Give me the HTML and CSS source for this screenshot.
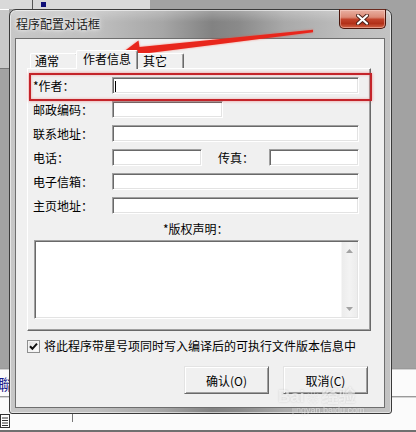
FILE: index.html
```html
<!DOCTYPE html>
<html lang="zh-CN">
<head>
<meta charset="utf-8">
<title>程序配置对话框</title>
<link rel="stylesheet" href="styles.css">
</head>
<body>
<div class="desktop">
  <!-- window behind the dialog -->
  <div class="backwin">
    <div class="bw-top"><span class="bw-sep"></span><span class="bw-mark"></span></div>
    <div class="bw-left"></div>
    <div class="bw-bottom">
      <div class="bw-line"></div>
      <div class="bw-row"><span class="bw-char">聯</span></div>
      <div class="bw-line"></div>
      <div class="bw-status">
        <svg class="bw-doc" width="10" height="14" viewBox="0 0 10 14"><rect x="0.5" y="0.5" width="9" height="13" fill="#fff" stroke="#333"/><path d="M2 4h6M2 6.5h6M2 9h6M2 11.5h6" stroke="#333"/></svg>
        <span class="bw-vsep"></span>
      </div>
    </div>
  </div>

  <div class="dialog">
    <div class="titlebar">
      <span class="title">程序配置对话框</span>
      <div class="close">
        <svg width="13" height="11" viewBox="0 0 13 11"><path d="M2 1.5l9 8M11 1.5l-9 8" stroke="#4a2018" stroke-width="4" stroke-linecap="round"/><path d="M2 1.5l9 8M11 1.5l-9 8" stroke="#fff" stroke-width="2.2" stroke-linecap="round"/></svg>
      </div>
    </div>
    <div class="client">
      <div class="tabs">
        <div class="tab">通常</div>
        <div class="tab active">作者信息</div>
        <div class="tab">其它</div>
      </div>
      <div class="panel">
        <div class="row">
          <span class="label">*作者：</span>
          <span class="edit wide"><span class="caret"></span></span>
        </div>
        <div class="row">
          <span class="label">邮政编码：</span>
          <span class="edit zip"></span>
        </div>
        <div class="row">
          <span class="label">联系地址：</span>
          <span class="edit wide"></span>
        </div>
        <div class="row">
          <span class="label">电话：</span>
          <span class="edit half"></span>
          <span class="label fax">传真：</span>
          <span class="edit half"></span>
        </div>
        <div class="row">
          <span class="label">电子信箱：</span>
          <span class="edit wide"></span>
        </div>
        <div class="row">
          <span class="label">主页地址：</span>
          <span class="edit wide"></span>
        </div>
        <div class="memo-label">*版权声明：</div>
        <div class="memo">
          <div class="memo-text"></div>
          <div class="vscroll">
            <svg width="7" height="4" viewBox="0 0 7 4"><path d="M0 4L3.5 0L7 4z" fill="#a3a3a3"/></svg>
            <svg width="7" height="4" viewBox="0 0 7 4"><path d="M0 0L3.5 4L7 0z" fill="#a3a3a3"/></svg>
          </div>
        </div>
      </div>
      <div class="check">
        <span class="box"><svg width="11" height="11" viewBox="0 0 11 11"><path d="M2 5.2l2.4 2.6L9 2.6" fill="none" stroke="#111" stroke-width="2"/></svg></span>
        <span>将此程序带星号项同时写入编译后的可执行文件版本信息中</span>
      </div>
      <div class="buttons">
        <div class="btn">确认(O)</div>
        <div class="btn">取消(C)</div>
      </div>
    </div>
  </div>

  <!-- annotation layer -->
  <div class="highlight"></div>
  <svg class="arrow" width="416" height="432" viewBox="0 0 416 432">
    <path d="M313 29.8 L139.5 47 L138.5 40.5 L118.5 55.5 L142.5 61.5 L141.3 54 L313 32.2 Z" fill="#e8261c"/>
  </svg>
  <div class="watermark"><span class="wm-logo">Bai<span class="wm-paw">❀</span>经验</span><span class="wm-url">jingyan.baidu.com</span></div>
</div>
</body>
</html>
```

FILE: styles.css
```css
* { box-sizing: border-box; }

html, body {
  margin: 0;
  padding: 0;
}

body {
  width: 416px;
  height: 432px;
  overflow: hidden;
  background: #a2a2a2;
  font-family: "Noto Sans CJK SC", "Noto Sans", sans-serif;
  font-size: 12px;
  line-height: 1;
  color: #000;
}

.desktop {
  position: relative;
  width: 416px;
  height: 432px;
}

/* ---------- window behind ---------- */
.backwin {
  position: absolute;
  inset: 0;
}

.bw-top {
  position: absolute;
  left: 0;
  top: 0;
  width: 150px;
  height: 9px;
  background: #d9d9d9;
}

.bw-sep {
  position: absolute;
  left: 32px;
  top: 0;
  width: 1px;
  height: 9px;
  background: #555;
}

.bw-mark {
  position: absolute;
  left: 41px;
  top: 2px;
  width: 5px;
  height: 5px;
  background: #101078;
}

.bw-left {
  position: absolute;
  left: 0;
  top: 9px;
  width: 9px;
  height: 60px;
  background: #c9c9c9;
  border-top: 1px solid #fff;
  border-bottom: 1px solid #777;
}

.bw-bottom {
  position: absolute;
  left: 0;
  top: 368px;
  width: 416px;
  height: 64px;
  background: #fbfbfb;
  display: flex;
  flex-direction: column;
}

.bw-line {
  height: 2px;
  background: #d4d4d4;
  border-top: 1px solid #9a9a9a;
}

.bw-row {
  height: 26px;
  display: flex;
  align-items: center;
}

.bw-char {
  font-family: "Noto Sans CJK TC", serif;
  font-size: 15px;
  color: #1c1c8c;
  margin-left: -2px;
}

.bw-status {
  flex: 1;
  position: relative;
  border-bottom: 2px solid #707070;
  display: flex;
  align-items: flex-end;
}

.bw-doc {
  margin: 0 0 2px 0;
}

.bw-vsep {
  position: absolute;
  left: 72px;
  top: 8px;
  width: 1px;
  height: 16px;
  background: #777;
}

/* ---------- dialog frame ---------- */
.dialog {
  position: absolute;
  left: 9px;
  top: 9px;
  width: 383px;
  height: 405px;
  border: 1px solid #3a3a3a;
  border-radius: 7px 7px 3px 3px;
  padding: 0 6px 5px 5px;
  background:
    linear-gradient(180deg, rgba(255,255,255,.25) 0, rgba(255,255,255,0) 12px),
    linear-gradient(90deg, #c7c7c7 0%, #c0c0c0 22%, #a6a6a6 40%, #828282 53%, #8a8a8a 60%, #a9a9a9 72%, #bdbdbd 88%, #c3c3c3 100%);
  box-shadow: inset 0 0 0 1px rgba(255,255,255,.55);
}

.titlebar {
  height: 28px;
  display: flex;
  justify-content: space-between;
  align-items: flex-start;
}

.title {
  margin: 8px 0 0 1px;
  font-size: 12px;
  color: #1a1a1a;
  text-shadow: 0 0 6px #fff, 0 0 3px rgba(255,255,255,.9);
}

.close {
  width: 47px;
  height: 20px;
  margin-top: -1px;
  margin-right: -1px;
  border: 1px solid #4a160c;
  border-top-color: #6a2a1e;
  border-radius: 0 0 5px 5px;
  background: linear-gradient(180deg, #e9b0a2 0%, #dc8a76 40%, #c2432b 52%, #b23018 75%, #d26446 100%);
  box-shadow: inset 0 0 0 1px rgba(255,220,210,.45);
  display: flex;
  align-items: center;
  justify-content: center;
}

/* ---------- client area ---------- */
.client {
  width: 370px;
  height: 370px;
  border: 1px solid #6e6e6e;
  background: #f0f0f0;
  display: flex;
  flex-direction: column;
}

.tabs {
  display: flex;
  align-items: flex-end;
  height: 19px;
  margin: 11px 0 -1px 14px;
  position: relative;
  z-index: 1;
}

.tab {
  height: 15px;
  margin-bottom: 1px;
  padding: 0 0 0 4px;
  border: 1px solid;
  border-color: #fff #696969 transparent #fff;
  border-bottom: 0;
  border-radius: 2px 2px 0 0;
  box-shadow: inset -1px 0 0 #a0a0a0;
  background: #f0f0f0;
  display: flex;
  align-items: center;
  width: 48px;
}

.tab.active {
  position: relative;
  z-index: 1;
  height: 19px;
  margin: 0 -2px;
  width: 62px;
  padding-left: 6px;
  padding-bottom: 2px;
}

.tab:last-child {
  padding-left: 6px;
}

.panel {
  width: 344px;
  height: 263px;
  margin-left: 11px;
  border: 1px solid;
  border-color: #fff #696969 #696969 #fff;
  box-shadow: inset -1px -1px 0 #a0a0a0;
  padding: 8px 10px 0 5px;
  display: flex;
  flex-direction: column;
  gap: 7px;
}

.row {
  display: flex;
  align-items: center;
  height: 17px;
}

.label {
  width: 79px;
  flex: none;
}

.label.fax {
  width: 51px;
  margin-left: 16px;
  padding-left: 0;
}

.edit {
  display: block;
  height: 17px;
  background: #fff;
  border: 1px solid;
  border-color: #a0a0a0 #fff #fff #a0a0a0;
  box-shadow: inset 1px 1px 0 #696969, inset -1px -1px 0 #e3e3e3;
  position: relative;
}

.edit.wide { width: 247px; }
.edit.zip { width: 111px; }
.edit.half { width: 90px; }

.caret {
  position: absolute;
  left: 2px;
  top: 3px;
  width: 1px;
  height: 11px;
  background: #000;
}

.memo-label {
  margin: 0 0 0 130px;
  height: 16px;
  line-height: 16px;
}

.memo {
  margin: -4px 0 0 1px;
  width: 325px;
  height: 79px;
  background: #fff;
  border: 1px solid;
  border-color: #a0a0a0 #fff #fff #a0a0a0;
  box-shadow: inset 1px 1px 0 #696969, inset -1px -1px 0 #e3e3e3;
  padding: 1px 1px 1px 1px;
  display: flex;
}

.memo-text {
  flex: 1;
}

.vscroll {
  width: 16px;
  background: linear-gradient(90deg, #ececec, #f3f3f3 50%, #ececec);
  border-left: 1px solid #f6f6f6;
  display: flex;
  flex-direction: column;
  justify-content: space-between;
  align-items: center;
  padding: 7px 0 6px;
}

.vscroll svg { display: block; }

/* ---------- checkbox ---------- */
.check {
  display: flex;
  align-items: center;
  gap: 4px;
  margin: 8px 0 0 11px;
  height: 14px;
}

.box {
  width: 13px;
  height: 13px;
  border: 1px solid #8e8f8f;
  background: linear-gradient(135deg, #dcdcdc, #f6f6f6 60%, #fff);
  box-shadow: inset 0 0 0 1px #f4f4f4;
  display: flex;
  align-items: center;
  justify-content: center;
}

.box svg { display: block; }

/* ---------- buttons ---------- */
.buttons {
  display: flex;
  justify-content: flex-end;
  gap: 14px;
  margin: 13px 16px 0 0;
}

.btn {
  width: 85px;
  height: 28px;
  border: 1px solid;
  border-color: #e3e3e3 #696969 #696969 #e3e3e3;
  box-shadow: inset 1px 1px 0 #fff, inset -1px -1px 0 #a0a0a0;
  background: #f0f0f0;
  display: flex;
  align-items: center;
  justify-content: center;
  padding-top: 1px;
}

/* ---------- annotation ---------- */
.highlight {
  position: absolute;
  left: 29px;
  top: 73px;
  width: 343px;
  height: 28px;
  border: 2px solid #c4242a;
  box-shadow: 0 0 3px rgba(235, 70, 70, .55), inset 0 0 3px rgba(235, 70, 70, .4);
}

.arrow {
  position: absolute;
  left: 0;
  top: 0;
  pointer-events: none;
  filter: drop-shadow(0 0 1px rgba(255, 60, 40, .5));
}

.watermark {
  position: absolute;
  left: 278px;
  top: 388px;
  display: flex;
  flex-direction: column;
  align-items: flex-start;
  color: rgba(255, 255, 255, .6);
  filter: blur(.7px);
  text-shadow: 0 0 2px rgba(120,120,120,.3);
  pointer-events: none;
}

.wm-logo {
  font-family: "Liberation Sans", "Noto Sans CJK SC", sans-serif;
  font-weight: bold;
  font-size: 17px;
  letter-spacing: 0;
}

.wm-paw {
  font-size: 13px;
  margin: 0 2px;
}

.wm-url {
  font-family: "Liberation Sans", sans-serif;
  font-size: 9px;
  margin: 1px 0 0 14px;
  color: rgba(255,255,255,.5);
}
```
